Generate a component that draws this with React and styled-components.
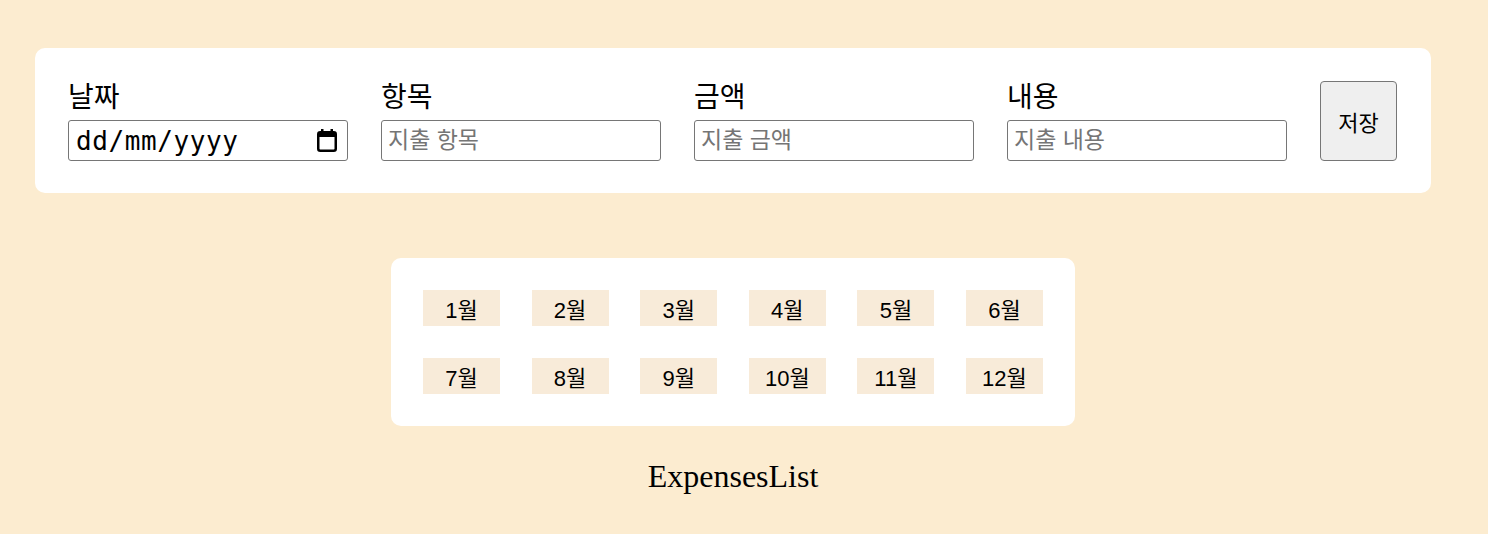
import styled, { createGlobalStyle } from "styled-components";

const GlobalStyle = createGlobalStyle`
  body {
    margin: 0;
    background-color: #fcecd0;
    font-family: "Liberation Serif", "Noto Sans CJK KR", serif;
  }
`;

const Page = styled.div`
  width: 1396px;
  padding: 48px 0 40px 35px;
  display: flex;
  flex-direction: column;
  align-items: center;
`;

const Form = styled.form`
  box-sizing: border-box;
  width: 100%;
  display: flex;
  align-items: stretch;
  gap: 33px;
  padding: 33px 33px 32px;
  background-color: #ffffff;
  border-radius: 10px;
`;

const Field = styled.div`
  display: flex;
  flex-direction: column;
`;

const Label = styled.label`
  height: 39px;
  line-height: 34px;
  font-size: 28px;
  color: #000;
`;

const Input = styled.input`
  box-sizing: border-box;
  width: 280px;
  height: 41px;
  padding: 1px 6px;
  border: 1px solid #767676;
  border-radius: 3px;
  font-family: "Liberation Sans", "Noto Sans CJK KR", sans-serif;
  font-size: 23px;
  color: #000;

  &::placeholder {
    color: #757575;
  }
`;

const DateBox = styled.div`
  box-sizing: border-box;
  width: 280px;
  height: 41px;
  display: flex;
  align-items: center;
  padding: 0 10px 0 7px;
  border: 1px solid #767676;
  border-radius: 3px;
`;

const DateText = styled.input`
  flex: 1;
  min-width: 0;
  padding: 0;
  border: none;
  outline: none;
  background: transparent;
  font-family: "DejaVu Sans Mono", monospace;
  font-size: 26px;
  letter-spacing: 0.6px;
  color: #000;

  &::placeholder {
    color: #000;
  }
`;

const SaveButton = styled.button`
  box-sizing: border-box;
  width: 77px;
  padding: 0;
  background-color: #efefef;
  border: 1px solid #767676;
  border-radius: 4px;
  font-family: "Liberation Sans", "Noto Sans CJK KR", sans-serif;
  font-size: 22px;
  color: #000;
`;

const MonthCard = styled.div`
  margin-top: 65px;
  width: 684px;
  box-sizing: border-box;
  padding: 32px;
  background-color: #ffffff;
  border-radius: 10px;
  display: grid;
  grid-template-columns: repeat(6, 77px);
  justify-content: space-between;
  row-gap: 32px;
`;

const MonthButton = styled.button`
  height: 36px;
  padding: 0;
  border: none;
  background-color: ${(props) => (props.selected ? "#f3c98b" : "#f8ebd9")};
  font-family: "Liberation Sans", "Noto Sans CJK KR", sans-serif;
  font-size: 22px;
  color: #000;
`;

const ListTitle = styled.div`
  margin-top: 32px;
  font-family: "Liberation Serif", serif;
  font-size: 32px;
  color: #000;
`;

const CalendarIcon = () => (
  <svg width="20" height="23" viewBox="0 0 20 23" aria-hidden="true">
    <rect x="4" y="0" width="2.5" height="4" fill="#000" />
    <rect x="13.5" y="0" width="2.5" height="4" fill="#000" />
    <rect
      x="1.25"
      y="3.25"
      width="17.5"
      height="18.5"
      rx="2"
      fill="none"
      stroke="#000"
      strokeWidth="2.5"
    />
    <rect x="1" y="3" width="18" height="5" fill="#000" />
  </svg>
);

const fields = [
  { id: "item", label: "항목", placeholder: "지출 항목" },
  { id: "amount", label: "금액", placeholder: "지출 금액" },
  { id: "desc", label: "내용", placeholder: "지출 내용" },
];

const months = Array.from({ length: 12 }, (_, i) => i + 1);

const App = () => {
  return (
    <>
      <GlobalStyle />
      <Page>
        <Form onSubmit={(e) => e.preventDefault()}>
          <Field>
            <Label htmlFor="date">날짜</Label>
            <DateBox>
              <DateText id="date" type="text" placeholder="dd/mm/yyyy" />
              <CalendarIcon />
            </DateBox>
          </Field>
          {fields.map((field) => (
            <Field key={field.id}>
              <Label htmlFor={field.id}>{field.label}</Label>
              <Input id={field.id} type="text" placeholder={field.placeholder} />
            </Field>
          ))}
          <SaveButton type="submit">저장</SaveButton>
        </Form>
        <MonthCard>
          {months.map((month) => (
            <MonthButton key={month}>{month}월</MonthButton>
          ))}
        </MonthCard>
        <ListTitle>ExpensesList</ListTitle>
      </Page>
    </>
  );
};

export default App;
